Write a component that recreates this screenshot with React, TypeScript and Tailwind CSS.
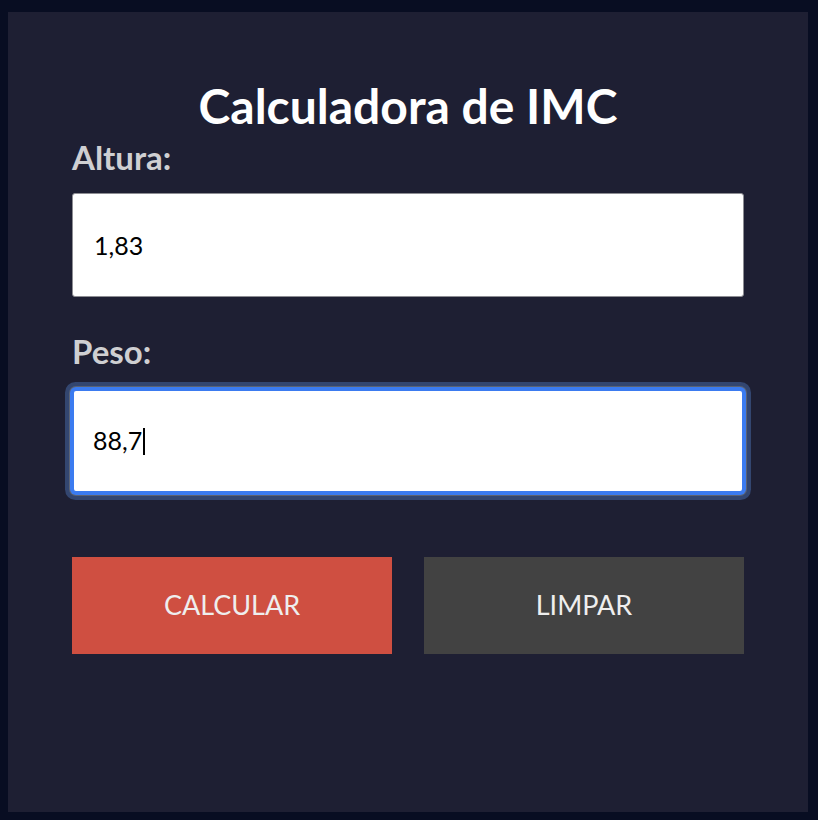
import { useState } from "react";

const lato = { fontFamily: "Lato, 'Open Sans', sans-serif" };

export default function App() {
  const [altura, setAltura] = useState("1,83");
  const [peso] = useState("88,7");

  return (
    <div className="min-h-screen bg-[#080d22] pt-[12px] pb-2 pl-2 pr-[10px]" style={lato}>
      <div className="h-[800px] bg-[#1e1f33] px-16 pt-[66px]">
        <h1 className="text-center text-[48px] font-bold leading-[56px] text-white">Calculadora de IMC</h1>

        <label className="mt-[4px] block text-[33px] font-bold leading-[38px] text-[#cfcfd2]">Altura:</label>
        <input
          className="mt-[17px] block h-[104px] w-full rounded-[3px] border border-[#8d8d93] bg-white px-[21px] text-[25px] text-black outline-none"
          style={lato}
          value={altura}
          onChange={(e) => setAltura(e.target.value)}
        />

        <label className="mt-[35px] block text-[33px] font-bold leading-[38px] text-[#cfcfd2]">Peso:</label>
        {/* focused field, caret drawn by hand so the shot stays stable */}
        <div className="mt-[19px] flex h-[104px] w-full items-center rounded-[4px] border-2 border-[#3b7bf0] bg-white px-[19px] text-[25px] text-black shadow-[0_0_0_2px_#3b7bf0,0_0_0_3px_#5b6272,0_0_0_7px_#334670]">
          <span>{peso}</span>
          <span className="ml-[1px] inline-block h-[27px] w-[2px] bg-black" />
        </div>

        <div className="mt-[64px] grid grid-cols-2 gap-8">
          <button className="h-[97px] bg-[#cf4f41] text-[27px] uppercase text-[#eeeeee]">Calcular</button>
          <button className="h-[97px] bg-[#424242] text-[27px] uppercase text-[#eeeeee]">Limpar</button>
        </div>
      </div>
    </div>
  );
}
